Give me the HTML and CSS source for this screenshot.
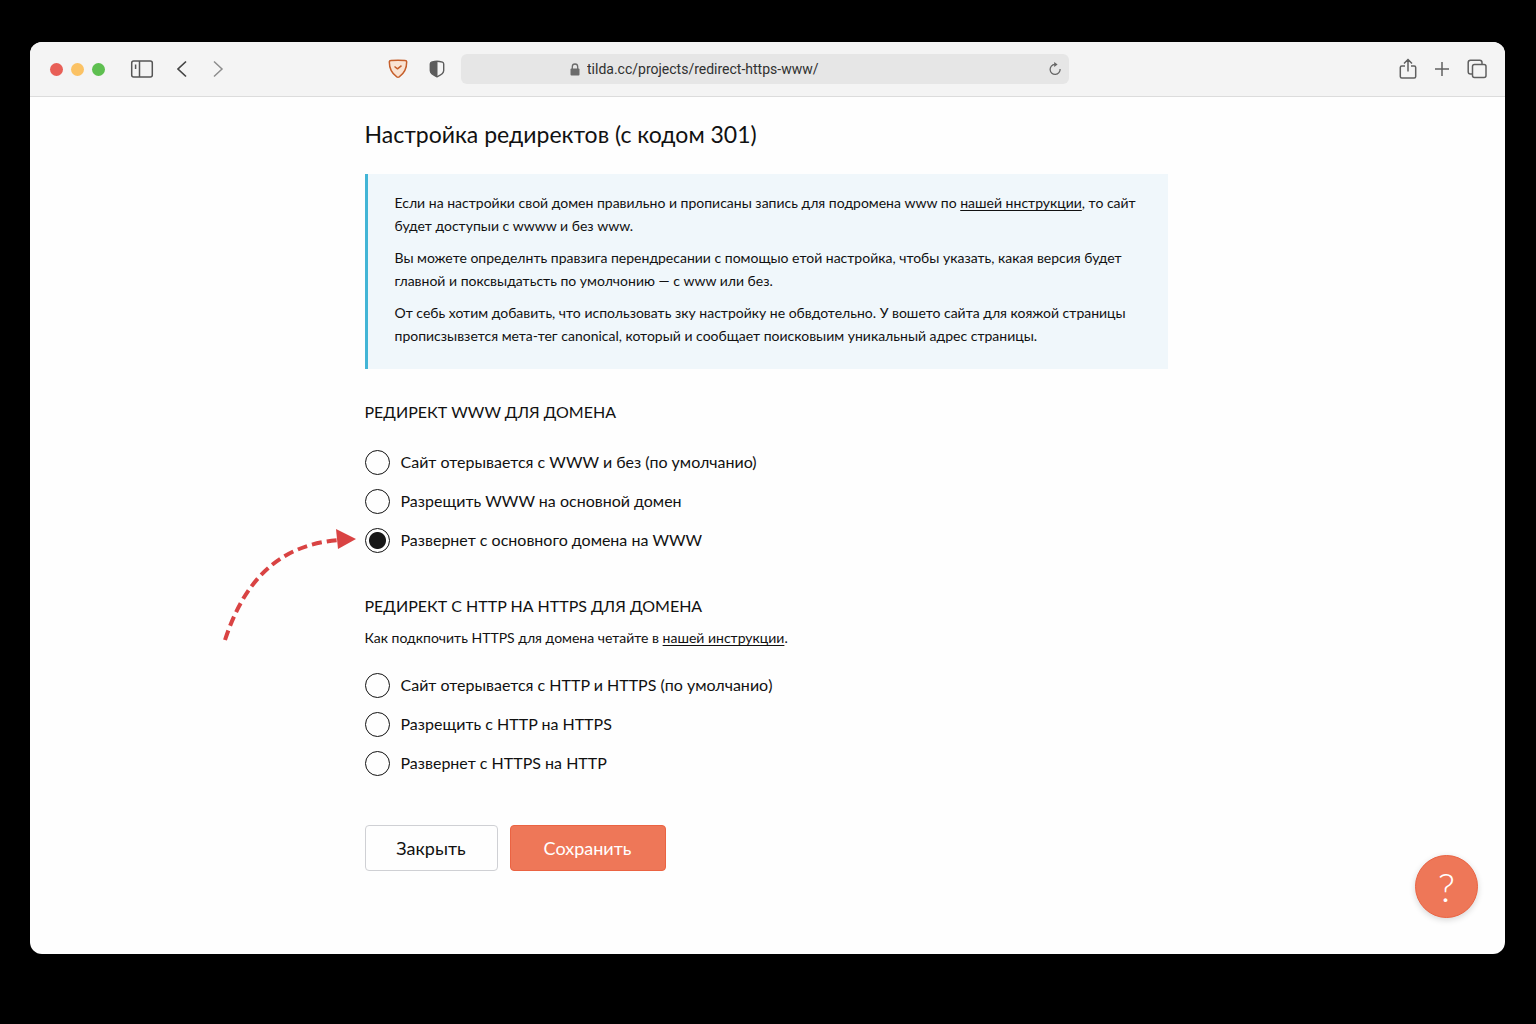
FILE: index.html
```html
<!DOCTYPE html>
<html lang="ru">
<head>
<meta charset="utf-8">
<meta name="viewport" content="width=device-width, initial-scale=1">
<title>Настройка редиректов</title>
<link rel="stylesheet" href="styles.css">
</head>
<body>
<div class="window">
  <header class="toolbar">
    <div class="toolbar-side toolbar-left">
      <div class="lights"><span class="light red"></span><span class="light yellow"></span><span class="light green"></span></div>
      <button class="tool" type="button" aria-label="Боковая панель">
        <svg width="24" height="20" viewBox="0 0 24 20" fill="none" stroke="#555" stroke-width="1.5"><rect x="1.7" y="2" width="20.6" height="16" rx="2"/><path d="M9.5 2v16M5.6 5.5v4.5"/></svg>
      </button>
      <div class="history">
        <button class="tool" type="button" aria-label="Назад">
          <svg width="12" height="18" viewBox="0 0 12 18" fill="none" stroke="#444" stroke-width="1.7"><path d="M10 1.5 2 9l8 7.5"/></svg>
        </button>
        <button class="tool" type="button" aria-label="Вперёд">
          <svg width="12" height="18" viewBox="0 0 12 18" fill="none" stroke="#8d8d8d" stroke-width="1.5"><path d="m2 1.5 8 7.5-8 7.5"/></svg>
        </button>
      </div>
      <div class="shields">
        <button class="tool" type="button" aria-label="Блокировщик">
          <svg width="20" height="20" viewBox="0 0 20 20" fill="#f9e3d3" stroke="#c65f2b" stroke-width="1.5" stroke-linejoin="round"><path d="M1.3 2.8Q1.3 1.5 3 1.4Q10 .9 17 1.4Q18.7 1.5 18.7 2.8C18.7 10 16.200 14.500 11.200 17.900Q10 18.600 8.800 17.900C3.800 14.500 1.300 10 1.300 2.800Z"/><path d="m6.500 7.500 3 2.300 4-3.200" fill="none"/></svg>
        </button>
        <button class="tool" type="button" aria-label="Конфиденциальность">
          <svg width="16" height="18" viewBox="0 0 16 18"><path d="M8 1.200C6.500 1.200 4.200 1.700 2.500 2.200Q1.300 2.600 1.300 4v6.500C1.300 13.500 5 15.500 8 16.800c3-1.300 6.700-3.300 6.700-6.300V4q0-1.400-1.200-1.800C11.800 1.700 9.500 1.200 8 1.200Z" fill="none" stroke="#5c5c5c" stroke-width="1.4"/><path d="M8.500 1C6.500 1 4 1.700 2.500 2.200Q1.300 2.600 1.300 4v6.500c0 3 4 5 7.200 6.500Z" fill="#5c5c5c"/></svg>
        </button>
      </div>
    </div>
    <div class="address">
      <svg class="lock" width="10" height="13" viewBox="0 0 10 13"><rect x=".5" y="5.500" width="9" height="7" rx="1" fill="#6b6b6b"/><path d="M2.300 6V3.700a2.700 2.700 0 0 1 5.400 0V6" fill="none" stroke="#6b6b6b" stroke-width="1.300"/></svg>
      <input class="url" type="text" aria-label="Адрес" value="tilda.cc/projects/redirect-https-www/">
      <button class="tool" type="button" aria-label="Обновить">
        <svg width="14" height="14" viewBox="0 0 14 14"><path d="M6.800 2.400A5 5 0 1 0 12.100 7" fill="none" stroke="#666" stroke-width="1.300"/><path d="M6.200.1 9.600 2.600 6.200 4.900Z" fill="#666"/></svg>
      </button>
    </div>
    <div class="toolbar-side toolbar-right">
      <button class="tool" type="button" aria-label="Поделиться">
        <svg width="18" height="22" viewBox="0 0 18 22" fill="none" stroke="#606060" stroke-width="1.500"><path d="M6 8H2.800Q1.300 8 1.300 9.500v9Q1.300 20 2.800 20h12.400q1.500 0 1.500-1.500v-9Q16.700 8 15.200 8H12M9 13.500V1.500M5 5.500l4-4 4 4"/></svg>
      </button>
      <button class="tool" type="button" aria-label="Новая вкладка">
        <svg width="16" height="16" viewBox="0 0 16 16" fill="none" stroke="#606060" stroke-width="1.500"><path d="M8 1v14M1 8h14"/></svg>
      </button>
      <button class="tool" type="button" aria-label="Все вкладки">
        <svg width="20" height="20" viewBox="0 0 20 20" fill="none" stroke="#606060" stroke-width="1.500"><rect x="5.500" y="5.500" width="13.500" height="13" rx="2"/><path d="M5.500 15H3.500Q1.200 15 1.200 12.700V3.500Q1.200 1.200 3.500 1.200h9.200Q15 1.200 15 3.500v2"/></svg>
      </button>
    </div>
  </header>

  <main class="page">
    <form class="settings">
      <h1>Настройка редиректов (с кодом 301)</h1>
      <div class="note">
        <p>Если на настройки свой домен правильно и прописаны запись для подромена www по <a href="#">нашей ннструкции</a>, то сайт будет доступыи с wwww и без www.</p>
        <p>Вы можете определнть правзига перендресании с помощыо етой настройка, чтобы указать, какая версия будет главной и поксвыдатьсть по умолчонию — с www или без.</p>
        <p>От себь хотим добавить, что использовать зку настройку не обвдотельно. У вошето сайта для кояжой страницы прописзывзется мета-тег canonical, который и сообщает поисковыим уникальный адрес страницы.</p>
      </div>

      <fieldset class="group group-www">
        <legend>РЕДИРЕКТ WWW ДЛЯ ДОМЕНА</legend>
        <div class="options">
          <label class="option"><input type="radio" name="www"><span>Сайт отерывается с WWW и без (по умолчанио)</span></label>
          <label class="option"><input type="radio" name="www"><span>Разрещить WWW на основной домен</span></label>
          <label class="option"><input type="radio" name="www" checked><span>Развернет с основного домена на WWW</span>
            <svg class="pointer" width="136" height="116" viewBox="0 0 136 116"><path d="M4 113C22 58 54 18 118 13" fill="none" stroke="#d94343" stroke-width="4" stroke-dasharray="10 5"/><path d="M115 2 135 12 117 22Z" fill="#d94343"/></svg>
          </label>
        </div>
      </fieldset>

      <fieldset class="group group-https">
        <legend>РЕДИРЕКТ С HTTP НА HTTPS ДЛЯ ДОМЕНА</legend>
        <p class="hint">Как подкпочить HTTPS для домена четайте в <a href="#">нашей инструкции</a>.</p>
        <div class="options">
          <label class="option"><input type="radio" name="https"><span>Сайт отерывается с HTTP и HTTPS (по умолчанио)</span></label>
          <label class="option"><input type="radio" name="https"><span>Разрещить с HTTP на HTTPS</span></label>
          <label class="option"><input type="radio" name="https"><span>Развернет с HTTPS на HTTP</span></label>
        </div>
      </fieldset>

      <div class="actions">
        <button class="btn btn-close" type="button">Закрыть</button>
        <button class="btn btn-save" type="button">Сохранить</button>
      </div>
    </form>
  </main>
  <button class="help" type="button" aria-label="Помощь">?</button>
</div>
</body>
</html>
```
FILE: styles.css
```css
* { box-sizing: border-box; }

body {
  margin: 0;
  min-height: 100vh;
  padding: 42px 31px 70px 30px;
  display: flex;
  background: #000;
  color: #111;
  font-family: Lato, "Noto Sans", sans-serif;
}

button { font: inherit; cursor: pointer; }
a { color: inherit; text-underline-offset: 2px; }

.window {
  position: relative;
  flex: 1;
  min-width: 0;
  border-radius: 12px;
  overflow: hidden;
  background: #fefefe;
}

/* Browser toolbar */
.toolbar {
  display: grid;
  grid-template-columns: 1fr minmax(200px, 608px) 1fr;
  align-items: center;
  height: 55px;
  padding: 0 18px 0 13px;
  background: #f4f4f4;
  border-bottom: 1px solid #dcdcdc;
}
.toolbar-side { display: flex; align-items: center; }
.toolbar-left { padding: 0 16px 0 7px; }
.toolbar-right { justify-content: flex-end; gap: 17px; }
.tool { display: flex; padding: 0; border: 0; background: none; }
.lights { display: flex; gap: 8px; margin-right: 25px; }
.light { width: 13px; height: 13px; border-radius: 50%; }
.red { background: #e85f57; }
.yellow { background: #fbc264; }
.green { background: #5ebf50; }
.history { display: flex; gap: 24px; margin-left: 22px; }
.shields { display: flex; align-items: center; gap: 21px; margin-left: auto; }

.address {
  display: flex;
  align-items: center;
  height: 30px;
  padding: 0 7px 0 109px;
  gap: 7px;
  border-radius: 6px;
  background: #e6e6e6;
}
.url {
  flex: 1;
  min-width: 0;
  padding: 0;
  border: 0;
  background: none;
  color: #303030;
  font: 14px/20px Roboto, sans-serif;
}

/* Settings page */
.page { padding: 21px 27px 83px 24px; }
.settings { max-width: 803px; margin: 0 auto; }
h1 { margin: 0; font-size: 23px; line-height: 32px; font-weight: 400; }

.note {
  margin-top: 24px;
  padding: 17px 24px 22px 27px;
  border-left: 3px solid #43b5d6;
  background: #f0f7fb;
  font-size: 14px;
  line-height: 23px;
}
.note p { margin: 0; }
.note p + p { margin-top: 9px; }

.group { margin: 0; padding: 0; border: 0; min-width: 0; }
.group-www { margin-top: 31px; }
.group-https { margin-top: 41px; }
legend { padding: 0; font-size: 16px; line-height: 24px; }
.hint { margin: 8px 0 0; font-size: 14px; line-height: 24px; }
.options { display: grid; gap: 13px; justify-items: start; }
.group-www .options { margin-top: 25px; }
.group-https .options { margin-top: 22px; }
.option {
  position: relative;
  display: flex;
  align-items: center;
  gap: 11px;
  font-size: 16px;
  line-height: 26px;
}
.option input {
  appearance: none;
  flex: none;
  width: 25px;
  height: 25px;
  margin: 0;
  border: 1px solid #111;
  border-radius: 50%;
}
.option input:checked { background: radial-gradient(circle, #171717 8px, transparent 9px); }
.pointer { position: absolute; right: calc(100% + 8px); top: 0; }

.actions { display: flex; gap: 12px; margin-top: 49px; }
.btn { height: 46px; border-radius: 4px; font-size: 18px; line-height: 24px; }
.btn-close { min-width: 133px; border: 1px solid #cfd0d4; background: #fefefe; color: #111; }
.btn-save { min-width: 156px; border: 1px solid #eb6342; background: #ee7758; color: #fff; }

.help {
  position: absolute;
  right: 27px;
  bottom: 36px;
  width: 63px;
  height: 63px;
  padding: 0;
  border: 1px solid #eb6342;
  border-radius: 50%;
  background: #ee7758;
  box-shadow: 0 2px 6px rgba(0, 0, 0, .16);
  color: #fff;
  font-size: 40px;
  font-weight: 300;
  line-height: 56px;
}
```
